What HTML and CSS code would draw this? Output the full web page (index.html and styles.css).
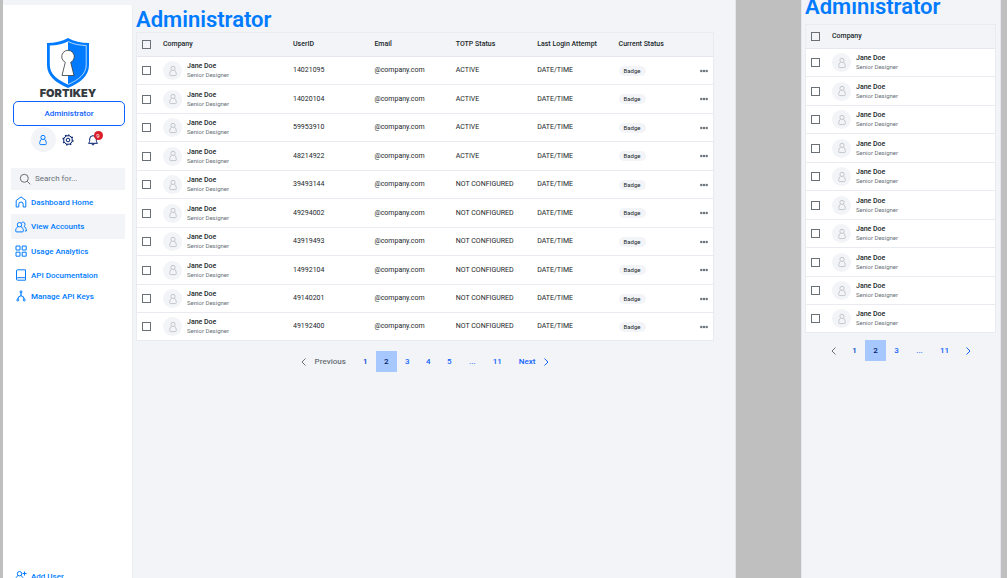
FILE: index.html
```html
<!DOCTYPE html>
<html lang="en">
<head>
<meta charset="utf-8">
<meta name="viewport" content="width=device-width, initial-scale=1">
<title>FortiKey Administrator</title>
<link rel="stylesheet" href="styles.css">
</head>
<body>
<svg class="sprite" aria-hidden="true">
  <symbol id="i-user" viewBox="0 0 12 12"><circle cx="6" cy="3.4" r="2.1"/><path d="M4.500 5.200C3.200 6.200 2.700 7.800 2.700 9.600q0 1 1 1h4.600q1 0 1-1c0-1.800-.5-3.400-1.800-4.400"/></symbol>
  <symbol id="i-left" viewBox="0 0 8 8"><path d="M5.500.5 2 4l3.500 3.500"/></symbol>
  <symbol id="i-right" viewBox="0 0 8 8"><path d="M2.500.5 6 4 2.500 7.500"/></symbol>
  <symbol id="i-dots" viewBox="0 0 8 4"><circle cx="1.300" cy="2" r="1.200"/><circle cx="4" cy="2" r="1.200"/><circle cx="6.700" cy="2" r="1.200"/></symbol>
</svg>

<section class="panel panel-wide">
  <aside class="sidebar">
    <div class="brand">
      <svg class="shield" viewBox="0 0 42 50" aria-hidden="true">
        <path fill="#007bff" d="M21 0c6 3.600 13 4.800 21 5v22c0 11-9 18-21 23C9 45 0 38 0 27V5c8-.2 15-1.400 21-5Z"/>
        <path fill="#fff" d="M21 3.500V46.500C10.500 42 2.800 36 2.800 27V7.500C9.500 7.300 15.500 6.300 21 3.500Z"/>
        <path fill="none" stroke="#fff" stroke-width=".7" d="M21 3.500c5.500 2.800 11.500 3.800 18.200 4V27c0 9-7.700 15-18.200 19.500"/>
        <path fill="#fff" stroke="#343a40" stroke-width=".8" d="M18.300 24.300a6.300 6.300 0 1 1 5.400 0L27 37.500H15Z"/>
      </svg>
      <span class="brand-name">FORTIKEY</span>
    </div>
    <button class="role" type="button">Administrator</button>
    <div class="quick">
      <button class="quick-btn is-active" type="button" aria-label="Profile"><svg class="icon"><use href="#i-user"/></svg></button>
      <button class="quick-btn" type="button" aria-label="Settings">
        <svg class="icon" viewBox="0 0 12 12"><circle cx="6" cy="6" r="4.300"/><circle cx="6" cy="6" r="1.800"/><path stroke-width="1.200" stroke-dasharray="1.600 2.330" d="M6 1a5 5 0 1 1 0 10A5 5 0 1 1 6 1Z"/></svg>
      </button>
      <button class="quick-btn" type="button" aria-label="Notifications, 9 unread">
        <svg class="icon" viewBox="0 0 12 12"><path d="M1.500 9.300h9C9.300 8 9.300 7.200 9.300 5a3.300 3.300 0 0 0-6.600 0c0 2.200 0 3-1.200 4.300ZM4.700 9.500c.1 1.900 2.500 1.900 2.600 0"/></svg>
        <span class="count">9</span>
      </button>
    </div>
    <label class="search">
      <svg class="icon" viewBox="0 0 12 12"><circle cx="5.300" cy="5.300" r="4"/><path d="m8.300 8.300 3 3"/></svg>
      <input class="search-input" type="search" placeholder="Search for..." aria-label="Search">
    </label>
    <nav class="nav">
      <a class="nav-link" href="#"><svg class="icon" viewBox="0 0 12 12"><path d="M3.800 11H1.200V4.500L6 .9l4.800 3.600V11H8.200V8.200a2.200 2.200 0 0 0-4.400 0Z"/></svg>Dashboard Home</a>
      <a class="nav-link is-current" href="#"><svg class="icon" viewBox="0 0 12 12"><circle cx="4.500" cy="3.700" r="2.200"/><path d="M3 5.500C1.400 6.500.7 8 .7 10q0 .9.900.9h5.800q.9 0 .9-.9c0-2-.7-3.500-2.300-4.500M6.500 1.700C7.500.6 10 .9 10 3.300c0 .9-.4 1.500-1 2 1.700 1 2.400 2.700 2.400 4.700H9.800"/></svg>View Accounts</a>
      <a class="nav-link" href="#"><svg class="icon" viewBox="0 0 12 12"><path d="M1 1h4v4H1ZM7.200 1h4v4h-4ZM1 7.200h4v4H1ZM7.200 7.200h4v4h-4Z"/></svg>Usage Analytics</a>
      <a class="nav-link" href="#"><svg class="icon" viewBox="0 0 12 12"><path d="M2.500.8h8v10.400h-8q-1 0-1-1.200V2Q1.500.8 2.500.8ZM1.500 10q0-1.300 1-1.300h8"/></svg>API Documentaion</a>
      <a class="nav-link is-short" href="#"><svg class="icon" viewBox="0 0 12 12"><circle cx="6" cy="1.800" r="1"/><circle cx="2.800" cy="10" r="1"/><circle cx="9.200" cy="10" r="1"/><path stroke-width="1.200" d="M6 2.500V6M6 5.500C3.500 6.500 3 7.500 2.800 9M6 5.500c2.500 1 3 2 3.200 3.500"/></svg>Manage API Keys</a>
    </nav>
    <a class="nav-link add-user" href="#"><svg class="icon" viewBox="0 0 12 12"><circle cx="4.500" cy="3.700" r="2.200"/><path d="M3 5.500C1.400 6.500.7 8 .7 10.800h7.600c0-2.800-.7-4.300-2.300-5.300M9.500 1.500v4M7.500 3.500h4"/></svg>Add User</a>
  </aside>

  <main class="content">
    <h1 class="title">Administrator</h1>
    <table class="grid">
      <colgroup><col class="c-check"><col class="c-company"><col><col><col><col><col><col class="c-more"></colgroup>
      <thead><tr>
        <th><input class="check" type="checkbox" aria-label="Select all"></th>
        <th>Company</th><th>UserID</th><th>Email</th><th>TOTP Status</th><th>Last Login Attempt</th><th>Current Status</th><th></th>
      </tr></thead>
      <tbody id="accounts"></tbody>
    </table>
    <nav class="pager" aria-label="Pages">
      <a class="page is-muted is-prev" href="#"><svg class="chev"><use href="#i-left"/></svg>Previous</a>
      <a class="page is-deep" href="#">1</a><a class="page is-on" href="#" aria-current="page">2</a><a class="page" href="#">3</a><a class="page" href="#">4</a><a class="page" href="#">5</a><span class="page is-wide">...</span><a class="page is-wide" href="#">11</a>
      <a class="page is-next" href="#">Next<svg class="chev"><use href="#i-right"/></svg></a>
    </nav>
  </main>
</section>

<section class="panel panel-narrow">
  <h2 class="title title-cut">Administrator</h2>
  <table class="grid">
    <colgroup><col class="c-check"><col></colgroup>
    <thead><tr><th><input class="check" type="checkbox" aria-label="Select all"></th><th>Company</th></tr></thead>
    <tbody id="accounts-compact"></tbody>
  </table>
  <nav class="pager" aria-label="Pages, compact">
    <a class="page is-muted" href="#" aria-label="Previous"><svg class="chev"><use href="#i-left"/></svg></a>
    <a class="page is-deep" href="#">1</a><a class="page is-on" href="#" aria-current="page">2</a><a class="page" href="#">3</a><span class="page is-wide">...</span><a class="page is-wide" href="#">11</a>
    <a class="page" href="#" aria-label="Next"><svg class="chev"><use href="#i-right"/></svg></a>
  </nav>
</section>
<script src="app.js"></script>
</body>
</html>
```
FILE: styles.css
```css
* { box-sizing: border-box; }
body {
  margin: 0;
  padding: 0 6px 0 3px;
  height: 100vh;
  display: flex;
  gap: 65px;
  overflow: hidden;
  background: #bfbfbf;
  font: 400 7px/9px Roboto, "Liberation Sans", sans-serif;
  color: #21272a;
}
a { color: inherit; text-decoration: none; }
button { font: inherit; padding: 0; border: 0; background: none; }
.sprite { position: absolute; width: 0; height: 0; }
.icon { width: 12px; height: 12px; flex: none; fill: none; stroke: currentColor; stroke-width: 1; }
.panel { background: #f2f4f8; border: 1px solid #e4e7ed; border-width: 0 1px 0 0; }
.panel-wide { flex: 1; min-width: 0; display: flex; }
.panel-narrow { flex: none; width: 200px; padding: 0 4px 0 3px; border-left-width: 1px; }

.sidebar {
  flex: none;
  width: 130px;
  margin-top: 5px;
  padding: 33px 7px 0 8px;
  display: flex;
  flex-direction: column;
  background: #fff;
  border-right: 1px solid #eceef2;
}
.brand { display: flex; flex-direction: column; align-items: center; }
.shield { width: 42px; height: 50px; }
.brand-name { font: 900 11px/11px Inter, sans-serif; color: #343a40; }
.role {
  height: 25px;
  margin: 2px 0 0 2px;
  border: 1px solid #0f62fe;
  border-radius: 5px;
  background: #fff;
  color: #0f62fe;
  font-size: 8px;
  font-weight: 500;
}
.quick { display: flex; justify-content: center; margin-top: 1px; }
.quick-btn {
  position: relative;
  width: 25px;
  height: 25px;
  display: flex;
  align-items: center;
  justify-content: center;
  border-radius: 50%;
  color: #001d6c;
}
.quick-btn.is-active { background: #f2f4f8; color: #007bff; }
.count {
  position: absolute;
  top: 4px;
  right: 3px;
  width: 9px;
  border-radius: 50%;
  background: #da1e28;
  color: #fff;
  font-size: 6px;
  text-align: center;
}
.search { display: flex; align-items: center; gap: 4px; height: 22px; margin-top: 16px; padding: 0 8px; background: #f2f4f8; color: #697077; }
.search-input { flex: 1; min-width: 0; padding: 0; border: 0; outline: 0; background: none; font: inherit; font-size: 8px; line-height: 12px; }
.search-input::placeholder { color: #697077; }
.nav-link { display: flex; align-items: center; gap: 4px; height: 24px; padding-left: 4px; font-size: 8px; font-weight: 500; color: #007bff; }
.nav-link.is-current { height: 25px; background: #f2f4f8; }
.nav-link.is-short { height: 18px; }
.add-user { margin: auto 0 -10px; }

.content { flex: 1; min-width: 0; padding: 8px 21px 0 3px; }
.title { margin: 0; font-size: 22px; line-height: 24px; font-weight: 600; color: #007bff; }
.title-cut { margin-top: -5px; padding-bottom: 5px; }
.grid { width: 100%; table-layout: fixed; border-collapse: separate; border-spacing: 0; border: 1px solid #e9ebf0; border-bottom: 0; background: #fff; }
.c-check { width: 26px; }
.c-company { width: 130px; }
.c-more { width: 13px; }
.grid th, .grid td { padding: 0; text-align: left; vertical-align: middle; white-space: nowrap; }
.grid th { height: 24px; background: #f2f4f8; border-bottom: 1px solid #e4e7ed; font-weight: 500; }
.grid td { height: 28px; border-bottom: 1px solid #e9ebf0; }
.grid tbody tr:nth-child(even) td { height: 29px; }
.grid tbody tr:last-child td { height: 28px; }
.check { appearance: none; display: block; width: 9px; height: 9px; margin: 0 0 0 5px; border: 1px solid #697077; }
.person { display: flex; align-items: center; gap: 5px; }
.avatar { width: 19px; height: 19px; display: flex; align-items: center; justify-content: center; border-radius: 50%; background: #f2f4f8; color: #c1c7cd; }
.name { display: block; font-weight: 500; }
.job { display: block; font-size: 6px; line-height: 8px; color: #697077; }
.badge { display: block; width: max-content; padding: 0 5px; border-radius: 5px; background: #f2f4f8; font-size: 6px; line-height: 10px; }
.more { display: block; height: 4px; }
.dots { display: block; width: 8px; height: 4px; fill: #697077; }

.pager { display: flex; justify-content: center; margin-top: 10px; color: #0f62fe; font-size: 8px; font-weight: 500; }
.panel-narrow .pager { margin-top: 7px; }
.page { display: flex; align-items: center; justify-content: center; gap: 7px; min-width: 21px; height: 21px; }
.page.is-wide { min-width: 25px; }
.page.is-on { background: #a6c8ff; color: #001d6c; }
.page.is-deep { color: #0043ce; }
.page.is-muted { color: #697077; }
.page.is-prev { padding-right: 9px; }
.page.is-next { padding-left: 9px; }
.chev { width: 8px; height: 8px; fill: none; stroke: currentColor; stroke-width: 1; }
```
FILE: app.js
```javascript
const accounts = [
  ["14021095", "ACTIVE"], ["14020104", "ACTIVE"], ["59953910", "ACTIVE"], ["48214922", "ACTIVE"],
  ["39493144", "NOT CONFIGURED"], ["49294002", "NOT CONFIGURED"], ["43919493", "NOT CONFIGURED"],
  ["14992104", "NOT CONFIGURED"], ["49140201", "NOT CONFIGURED"], ["49192400", "NOT CONFIGURED"]
];

const lead = (id) => `
  <td><input class="check" type="checkbox" aria-label="Select account ${id}"></td>
  <td><div class="person"><span class="avatar"><svg class="icon"><use href="#i-user"/></svg></span>
    <span><span class="name">Jane Doe</span><span class="job">Senior Designer</span></span></div></td>`;

document.getElementById("accounts").innerHTML = accounts.map(([id, totp]) => `
  <tr>${lead(id)}<td>${id}</td><td>@company.com</td><td>${totp}</td><td>DATE/TIME</td>
  <td><span class="badge">Badge</span></td>
  <td><button class="more" type="button" aria-label="More"><svg class="dots"><use href="#i-dots"/></svg></button></td></tr>`).join("");

document.getElementById("accounts-compact").innerHTML = accounts.map(([id]) => `<tr>${lead(id)}</tr>`).join("");
```
